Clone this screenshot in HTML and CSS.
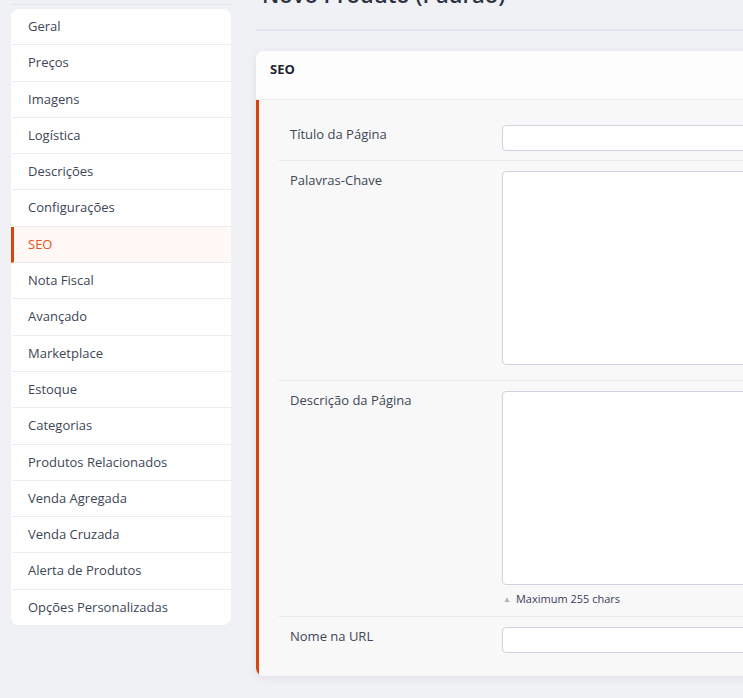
FILE: index.html
```html
<!DOCTYPE html>
<html lang="pt-BR">
<head>
    <meta charset="UTF-8">
    <meta name="viewport" content="width=device-width, initial-scale=1.0">
    <title>Novo Produto (Padrão)</title>
    <link rel="stylesheet" href="styles.css">
</head>
<body>

    <div class="page">

        <!-- Left menu with product sections -->
        <aside class="side">
            <div class="side-top"></div>
            <ul class="tabs">
                <li><a href="#">Geral</a></li>
                <li><a href="#">Preços</a></li>
                <li><a href="#">Imagens</a></li>
                <li><a href="#">Logística</a></li>
                <li><a href="#">Descrições</a></li>
                <li><a href="#">Configurações</a></li>
                <li class="active"><a href="#">SEO</a></li>
                <li><a href="#">Nota Fiscal</a></li>
                <li><a href="#">Avançado</a></li>
                <li><a href="#">Marketplace</a></li>
                <li><a href="#">Estoque</a></li>
                <li><a href="#">Categorias</a></li>
                <li><a href="#">Produtos Relacionados</a></li>
                <li><a href="#">Venda Agregada</a></li>
                <li><a href="#">Venda Cruzada</a></li>
                <li><a href="#">Alerta de Produtos</a></li>
                <li><a href="#">Opções Personalizadas</a></li>
            </ul>
        </aside>

        <!-- Main content -->
        <main class="main">
            <h1 class="page-title">Novo Produto (Padrão)</h1>

            <section class="card">
                <div class="card-head">SEO</div>
                <div class="card-body">
                    <div class="field">
                        <label class="field-label" for="meta-title">Título da Página</label>
                        <div class="field-control">
                            <input type="text" id="meta-title" class="input">
                        </div>
                    </div>
                    <div class="field">
                        <label class="field-label" for="meta-keyword">Palavras-Chave</label>
                        <div class="field-control">
                            <textarea id="meta-keyword" class="textarea"></textarea>
                        </div>
                    </div>
                    <div class="field">
                        <label class="field-label" for="meta-description">Descrição da Página</label>
                        <div class="field-control">
                            <textarea id="meta-description" class="textarea"></textarea>
                            <p class="note"><span class="note-arrow">▲</span>Maximum 255 chars</p>
                        </div>
                    </div>
                    <div class="field">
                        <label class="field-label" for="url-key">Nome na URL</label>
                        <div class="field-control">
                            <input type="text" id="url-key" class="input">
                        </div>
                    </div>
                </div>
            </section>
        </main>

    </div>

</body>
</html>
```

FILE: styles.css
```css
/* Reset */
* {
    margin: 0;
    padding: 0;
    box-sizing: border-box;
}

html {
    overflow: hidden;
}

body {
    font-family: 'Open Sans', 'Liberation Sans', sans-serif;
    font-size: 13px;
    color: #3d4656;
    background: #eff1f5;
    height: 698px;
}

.page {
    display: flex;
    align-items: flex-start;
    width: 1000px;
}

/* Left menu */
.side {
    width: 220px;
    margin-left: 11px;
    flex-shrink: 0;
}

.side-top {
    height: 5px;
    border-bottom: 1px solid #e3e6ec;
    margin-bottom: 4px;
}

.tabs {
    list-style: none;
    background: #ffffff;
    border-radius: 8px;
    overflow: hidden;
}

.tabs li {
    border-bottom: 1px solid #ececef;
    margin-left: 1px;
}

.tabs li:last-child {
    border-bottom: none;
}

.tabs a {
    display: block;
    padding: 8px 16px 8px 16px;
    line-height: 19.3px;
    color: #3d4656;
    text-decoration: none;
}

.tabs li.active {
    background: #fff8f4;
    margin-left: 0;
    border-left: 3px solid #d9430e;
}

.tabs li.active a {
    color: #e5531a;
    padding-left: 14px;
}

/* Main area */
.main {
    flex: 1;
    margin-left: 25px;
    margin-top: -21px;
}

.page-title {
    font-size: 22px;
    font-weight: 600;
    line-height: 30px;
    color: #2b3240;
    padding: 0 0 20px 6px;
    border-bottom: 2px solid #e2e7ef;
}

.card {
    margin-top: 20px;
    border-radius: 8px;
    background: #f8f8f8;
    box-shadow: 0 2px 8px rgba(20, 30, 50, 0.08);
    overflow: hidden;
}

.card-head {
    height: 49px;
    padding: 9px 14px 0;
    line-height: 19px;
    font-weight: 700;
    color: #1f2430;
    background: #fdfdfd;
    border-bottom: 1px solid #ececec;
}

.card-body {
    border-left: 3px solid #d9430e;
    padding: 15px 0 14px 19px;
}

/* Form rows */
.field {
    display: flex;
    padding: 10px 0 9px 12px;
    border-bottom: 1px solid #ececec;
}

.field:last-child {
    border-bottom: none;
}

.field-label {
    width: 212px;
    flex-shrink: 0;
    line-height: 19px;
}

.field-control {
    flex: 1;
}

.input,
.textarea {
    display: block;
    width: 100%;
    background: #ffffff;
    border: 1px solid #cdd5e1;
    border-radius: 4px;
    font-family: inherit;
    font-size: 13px;
}

.input {
    height: 26px;
}

.textarea {
    height: 194px;
    resize: none;
    margin-bottom: 6px;
}

.note {
    font-size: 11px;
    line-height: 16px;
    color: #3a3d5c;
    margin-top: 0;
    padding-left: 1px;
}

.note-arrow {
    font-size: 8px;
    color: #a9b4bc;
    margin-right: 5px;
    vertical-align: 1px;
}
```
